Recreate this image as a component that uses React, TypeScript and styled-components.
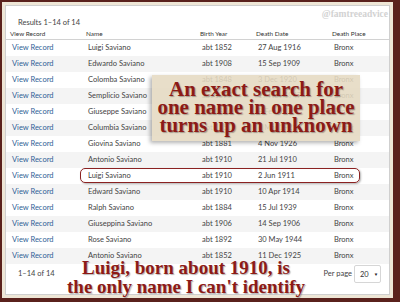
import styled, { createGlobalStyle } from 'styled-components';

const GlobalStyle = createGlobalStyle`
  html, body {
    margin: 0;
    padding: 0;
    background: #5a211c;
  }
  * {
    box-sizing: border-box;
  }
`;

const records = [
  { name: 'Luigi Saviano', birth: 'abt 1852', death: '27 Aug 1916', place: 'Bronx' },
  { name: 'Edwardo Saviano', birth: 'abt 1908', death: '15 Sep 1909', place: 'Bronx' },
  { name: 'Colomba Saviano', birth: 'abt 1848', death: '3 Dec 1920', place: 'Bronx' },
  { name: 'Semplicio Saviano', birth: 'abt 1877', death: '19 Nov 1947', place: 'Bronx' },
  { name: 'Giuseppe Saviano', birth: 'abt 1874', death: '8 Feb 1936', place: 'Bronx' },
  { name: 'Columbia Saviano', birth: 'abt 1850', death: '6 Mar 1921', place: 'Bronx' },
  { name: 'Giovina Saviano', birth: 'abt 1881', death: '4 Nov 1926', place: 'Bronx' },
  { name: 'Antonio Saviano', birth: 'abt 1910', death: '21 Jul 1910', place: 'Bronx' },
  { name: 'Luigi Saviano', birth: 'abt 1910', death: '2 Jun 1911', place: 'Bronx' },
  { name: 'Edward Saviano', birth: 'abt 1910', death: '10 Apr 1914', place: 'Bronx' },
  { name: 'Ralph Saviano', birth: 'abt 1884', death: '15 Jul 1939', place: 'Bronx' },
  { name: 'Giuseppina Saviano', birth: 'abt 1906', death: '14 Sep 1906', place: 'Bronx' },
  { name: 'Rose Saviano', birth: 'abt 1892', death: '30 May 1944', place: 'Bronx' },
  { name: 'Antonio Saviano', birth: 'abt 1852', death: '11 Dec 1925', place: 'Bronx' },
];

const App = () => {
  return (
    <>
      <GlobalStyle />
      <Page>
        <Mat>
          <Panel>
            <TopBar>
              <ResultCount>Results 1–14 of 14</ResultCount>
            </TopBar>
            <HeaderRow>
              <HeaderCell>View Record</HeaderCell>
              <HeaderCell>Name</HeaderCell>
              <HeaderCell>Birth Year</HeaderCell>
              <HeaderCell>Death Date</HeaderCell>
              <HeaderCell>Death Place</HeaderCell>
            </HeaderRow>
            {records.map((r, index) => (
              <Row key={index} striped={index % 2 === 1}>
                <LinkCell>View Record</LinkCell>
                <Cell>{r.name}</Cell>
                <Cell>{r.birth}</Cell>
                <Cell>{r.death}</Cell>
                <Cell>{r.place}</Cell>
              </Row>
            ))}
            <Footer>
              <FooterText>1–14 of 14</FooterText>
              <PerPage>
                <FooterText>Per page</FooterText>
                <Select>
                  <span>20</span>
                  <Caret>▼</Caret>
                </Select>
              </PerPage>
            </Footer>
          </Panel>
        </Mat>
        <Watermark>@famtreeadvice</Watermark>
        <Highlight />
        <Callout>
          An exact search for
          <br />
          one name in one place
          <br />
          turns up an unknown
        </Callout>
        <Caption>
          Luigi, born about 1910, is
          <br />
          the only name I can't identify
        </Caption>
      </Page>
    </>
  );
};

const Page = styled.div`
  position: relative;
  width: 400px;
  height: 302px;
  padding: 2px 7px 4px 2px;
  background: #5a211c;
  overflow: hidden;
`;
const Mat = styled.div`
  height: 100%;
  padding: 3px;
  background: #eee6d6;
`;
const Panel = styled.div`
  height: 100%;
  display: flex;
  flex-direction: column;
  background: #fff;
  border: 1px solid #cfcfcf;
  font-family: Lato, 'Open Sans', sans-serif;
  color: #444;
`;
const TopBar = styled.div`
  height: 22px;
  padding: 12px 0 0 12px;
`;
const ResultCount = styled.div`
  font-size: 7.5px;
  line-height: 10px;
  color: #444;
`;
const HeaderRow = styled.div`
  display: grid;
  grid-template-columns: 76px 114px 56px 76px 1fr;
  height: 12px;
  border-bottom: 1px solid #d2d2d2;
`;
const HeaderCell = styled.div`
  padding-left: 4px;
  font-size: 6.4px;
  line-height: 11px;
  color: #333;
`;
const Row = styled.div<{ striped: boolean }>`
  display: grid;
  grid-template-columns: 76px 114px 56px 76px 1fr;
  height: 16px;
  align-items: center;
  background: ${(props) => (props.striped ? '#f4f4f4' : '#fff')};
`;
const Cell = styled.div`
  padding-left: 6px;
  font-size: 7.5px;
  line-height: 16px;
  color: #444;
  white-space: nowrap;
`;
const LinkCell = styled(Cell)`
  color: #2f5f96;
`;
const Footer = styled.div`
  flex: 1;
  display: flex;
  justify-content: space-between;
  align-items: flex-start;
  padding: 1px 8px 0 12px;
`;
const FooterText = styled.div`
  font-size: 7.5px;
  line-height: 18px;
  color: #444;
`;
const PerPage = styled.div`
  display: flex;
  align-items: center;
  gap: 2px;
`;
const Select = styled.div`
  width: 27px;
  height: 18px;
  display: flex;
  align-items: center;
  gap: 5px;
  padding: 0 0 0 5px;
  border: 1px solid #d6d6d6;
  border-radius: 2px;
  font-size: 7.5px;
  color: #333;
`;
const Caret = styled.span`
  font-size: 4.5px;
  color: #222;
`;
const Watermark = styled.div`
  position: absolute;
  top: 9px;
  right: 12px;
  font-family: 'Liberation Serif', serif;
  font-weight: bold;
  font-size: 9.5px;
  color: #d2d2d2;
`;
const Highlight = styled.div`
  position: absolute;
  left: 80px;
  top: 168px;
  width: 280px;
  height: 15px;
  border: 1.5px solid #8b2222;
  border-radius: 5px;
  box-shadow: 1px 1px 2px rgba(0, 0, 0, 0.3);
`;
const Callout = styled.div`
  position: absolute;
  left: 152px;
  top: 75px;
  width: 208px;
  height: 66px;
  padding-top: 5px;
  background: rgba(229, 218, 194, 0.88);
  box-shadow: -2px 2px 4px rgba(0, 0, 0, 0.3);
  font-family: 'Liberation Serif', serif;
  font-weight: bold;
  font-size: 21px;
  line-height: 18px;
  text-align: center;
  color: #8d1a16;
  text-shadow: 1px 1px 1px rgba(0, 0, 0, 0.3);
`;
const Caption = styled.div`
  position: absolute;
  left: 0;
  top: 258px;
  width: 372px;
  font-family: 'Liberation Serif', serif;
  font-weight: bold;
  font-size: 19px;
  line-height: 19px;
  text-align: center;
  color: #8d1a16;
  text-shadow: 1px 1px 1px rgba(0, 0, 0, 0.3);
`;

export default App;
